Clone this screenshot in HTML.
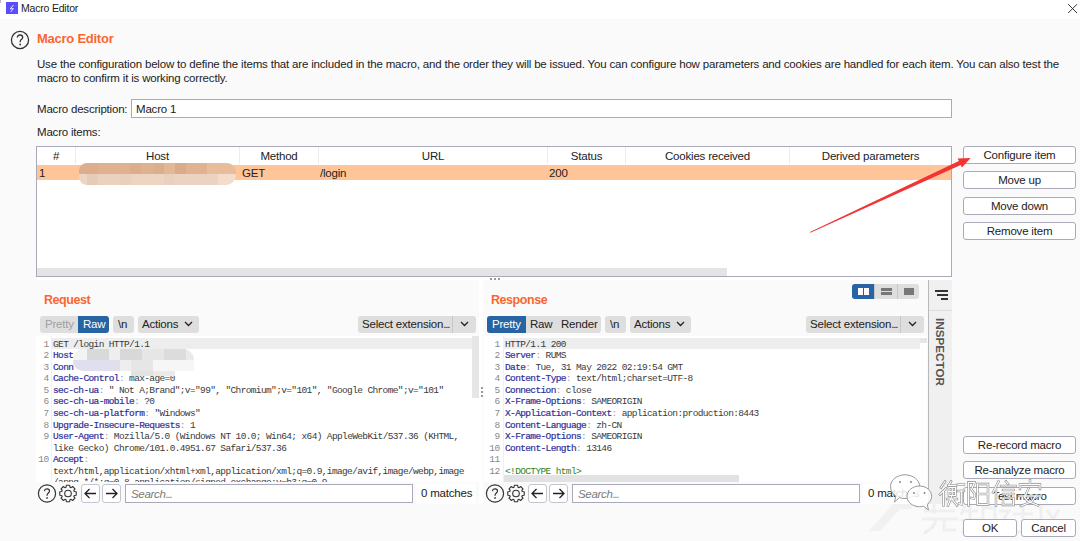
<!DOCTYPE html>
<html><head><meta charset="utf-8">
<style>
*{box-sizing:border-box;margin:0;padding:0}
html,body{width:1080px;height:541px;overflow:hidden;background:#fafafa;font-family:"Liberation Sans",sans-serif;color:#222;font-size:11.5px;letter-spacing:-0.2px}
.a{position:absolute;white-space:nowrap}
.btn{position:absolute;background:#fff;border:1px solid #a9a9ba;border-radius:3px;text-align:center;font-size:11.5px;color:#222;line-height:16px;white-space:nowrap}
.orange{color:#fa6631;font-weight:bold;letter-spacing:-0.45px}
.seg{position:absolute;background:#dedede;border-radius:3px;font-size:11.5px;line-height:17px;color:#222;white-space:nowrap}
.code{position:absolute;font-family:"Liberation Mono",monospace;font-size:9.5px;letter-spacing:-0.63px;line-height:11.54px;color:#3a3a3a;white-space:pre;margin-top:0.7px}
.k{color:#30309a;-webkit-text-stroke:0.2px #30309a}
.p{color:#999}
.g{color:#2a842a}
.ln{position:absolute;font-family:"Liberation Mono",monospace;font-size:9.5px;line-height:11.54px;color:#888;text-align:right;white-space:pre;margin-top:0.7px;letter-spacing:-0.3px}
.th{position:absolute;top:149.5px;font-size:11.5px;color:#222;text-align:center}
.sep{position:absolute;top:147px;width:1px;height:17px;background:#ececec}
</style></head><body>
<!-- title bar -->
<div class="a" style="left:0;top:0;width:1080px;height:19px;background:#fff"></div>
<div class="a" style="left:0;top:0;width:1px;height:3px;background:#bbb"></div>
<div class="a" style="left:6px;top:2px;width:12px;height:12px;background:#5b4dfc"></div>
<svg class="a" style="left:6px;top:2px" width="12" height="12" viewBox="0 0 12 12"><path d="M7.6 3 L4.2 6.8 L7.4 6.6 L4.6 10" fill="none" stroke="#e8e6ff" stroke-width="1"/></svg>
<div class="a" style="left:21px;top:2px;font-size:10.5px;color:#222">Macro Editor</div>
<svg class="a" style="left:1067px;top:3px" width="11" height="11" viewBox="0 0 11 11"><path d="M1.2 1.2 L10 10 M10 1.2 L1.2 10" stroke="#333" stroke-width="1"/></svg>

<!-- header -->
<svg class="a" style="left:10px;top:30px" width="20" height="20" viewBox="0 0 20 20"><circle cx="10" cy="10" r="8.6" fill="none" stroke="#333" stroke-width="1.3"/><path d="M7.3 7.6 C7.3 5.9 8.5 5 10 5 C11.6 5 12.7 6 12.7 7.4 C12.7 9.2 10.4 9.4 10.2 11.4 L10.2 12.3" fill="none" stroke="#333" stroke-width="1.3"/><circle cx="10.2" cy="14.5" r="0.9" fill="#333"/></svg>
<div class="a orange" style="left:37px;top:31px;font-size:13px;letter-spacing:-0.25px">Macro Editor</div>

<div class="a" style="left:37px;top:57.2px;line-height:14px;letter-spacing:-0.18px">Use the configuration below to define the items that are included in the macro, and the order they will be issued. You can configure how parameters and cookies are handled for each item. You can also test the<br>macro to confirm it is working correctly.</div>

<div class="a" style="left:37px;top:102.7px">Macro description:</div>
<div class="a" style="left:131px;top:99px;width:821px;height:19px;background:#fff;border:1px solid #a9a9ba"></div>
<div class="a" style="left:136px;top:102.7px">Macro 1</div>
<div class="a" style="left:37px;top:125.7px">Macro items:</div>

<!-- table -->
<div class="a" style="left:36px;top:146px;width:916px;height:131px;background:#fff;border:1px solid #a9a9ba"></div>
<div class="a" style="left:37px;top:268px;width:690px;height:8px;background:#e4e4e4"></div>
<div class="sep" style="left:75px"></div>
<div class="sep" style="left:239px"></div>
<div class="sep" style="left:318px"></div>
<div class="sep" style="left:547px"></div>
<div class="sep" style="left:625px"></div>
<div class="sep" style="left:789px"></div>
<div class="th" style="left:37px;width:38px">#</div>
<div class="th" style="left:76px;width:163px">Host</div>
<div class="th" style="left:240px;width:78px">Method</div>
<div class="th" style="left:319px;width:228px">URL</div>
<div class="th" style="left:548px;width:77px">Status</div>
<div class="th" style="left:626px;width:163px">Cookies received</div>
<div class="th" style="left:790px;width:161px">Derived parameters</div>
<div class="a" style="left:37px;top:165px;width:914px;height:15px;background:#ffc599"></div>
<div class="a" style="left:39px;top:166.8px">1</div>
<div class="a" style="left:242px;top:166.8px">GET</div>
<div class="a" style="left:320px;top:166.8px">/login</div>
<div class="a" style="left:549px;top:166.8px">200</div>
<!-- blurred host -->
<div class="a" style="left:79px;top:163px;width:157px;height:22px;overflow:hidden;border-radius:8px 9px 10px 8px"><div class="a" style="left:0px;top:0;width:19px;height:11px;background:#dcae8d"></div><div class="a" style="left:19px;top:0;width:32px;height:11px;background:#dfb18f"></div><div class="a" style="left:51px;top:0;width:11px;height:11px;background:#dcad8d"></div><div class="a" style="left:62px;top:0;width:13px;height:11px;background:#dfb28f"></div><div class="a" style="left:75px;top:0;width:10px;height:11px;background:#dbae90"></div><div class="a" style="left:85px;top:0;width:11px;height:11px;background:#e4b795"></div><div class="a" style="left:96px;top:0;width:11px;height:11px;background:#dbaa88"></div><div class="a" style="left:107px;top:0;width:21px;height:11px;background:#e0b290"></div><div class="a" style="left:128px;top:0;width:29px;height:11px;background:#e9bd9a"></div><div class="a" style="left:0px;top:11px;width:8px;height:11px;background:#eed5c2"></div><div class="a" style="left:8px;top:11px;width:11px;height:11px;background:#e6cbb9"></div><div class="a" style="left:19px;top:11px;width:22px;height:11px;background:#ebd2bf"></div><div class="a" style="left:41px;top:11px;width:11px;height:11px;background:#e9cfbc"></div><div class="a" style="left:52px;top:11px;width:33px;height:11px;background:#eed5c2"></div><div class="a" style="left:85px;top:11px;width:11px;height:11px;background:#e9d0bf"></div><div class="a" style="left:96px;top:11px;width:43px;height:11px;background:#ecd3c1"></div><div class="a" style="left:139px;top:11px;width:18px;height:11px;background:#f3dcca"></div></div>

<!-- faint watermark -->
<svg class="a" style="left:0;top:0" width="1080" height="541" viewBox="0 0 1080 541"><path d="M869 531 L894 503 L912 503 L912 509 L900 509 L880 531 Z" fill="#f1f1f1"/>
<g fill="none" stroke="#efefef" stroke-width="3">
<path d="M928 503 L925 511 M934 502 L934 514 M924 511 L955 511 M922 519 L958 519 M936 519 C935 526 931 530 924 533 M944 519 L944 530 L956 530"/>
<path d="M965 505 L961 515 M962 511 L978 511 M961 520 L979 520 M970 505 L970 520 M970 520 L962 533 M970 520 L978 532 M983 508 L995 508 L995 532 L983 532 Z"/>
<path d="M1003 503 L1006 506 M999 511 L1009 511 L1002 522 M1005 516 L1005 535 M1005 520 L1009 524 M1023 502 L1023 532 M1013 514 L1033 514 M1011 532 L1035 532"/>
<path d="M1063 504 L1041 504 L1041 533 L1064 533 M1047 510 L1059 528 M1059 510 L1047 528"/>
</g></svg>
<!-- right buttons -->
<div class="btn" style="left:963px;top:146px;width:113px;height:18px">Configure item</div>
<div class="btn" style="left:963px;top:171px;width:113px;height:18px">Move up</div>
<div class="btn" style="left:963px;top:197px;width:113px;height:18px">Move down</div>
<div class="btn" style="left:963px;top:222px;width:113px;height:18px">Remove item</div>
<div class="btn" style="left:963px;top:436px;width:113px;height:18px">Re-record macro</div>
<div class="btn" style="left:963px;top:461px;width:113px;height:18px">Re-analyze macro</div>
<div class="btn" style="left:963px;top:487px;width:113px;height:18px">Test macro</div>
<div class="btn" style="left:963px;top:519px;width:54px;height:18px">OK</div>
<div class="btn" style="left:1021px;top:519px;width:55px;height:18px">Cancel</div>

<!-- red arrow -->
<svg class="a" style="left:0;top:0" width="1080" height="541" viewBox="0 0 1080 541"><path d="M810.0 231.95 L958.9 161.0 L957.7 158.4 L970.7 157.9 L961.9 167.5 L960.7 164.9 L810.4 232.85 Z" fill="#f23434"/></svg>

<!-- splitter -->
<div class="a" style="left:37px;top:277px;width:915px;height:3px;background:#fff"></div>
<div class="a" style="left:490px;top:278px;width:2px;height:2px;background:#999"></div>
<div class="a" style="left:494px;top:278px;width:2px;height:2px;background:#999"></div>
<div class="a" style="left:498px;top:278px;width:2px;height:2px;background:#999"></div>
<div class="a" style="left:479px;top:280px;width:4px;height:224px;background:#fff"></div>

<!-- REQUEST -->
<div class="a orange" style="left:44px;top:293px;font-size:12.5px">Request</div>
<div class="seg" style="left:40px;top:316px;width:68px;height:17px"><span style="position:absolute;left:5px;color:#a0a0a0">Pretty</span></div>
<div class="seg" style="left:78px;top:316px;width:31px;height:17px;background:#2664a3;color:#fff;border-radius:0 3px 3px 0"><span style="position:absolute;left:5px">Raw</span></div>
<div class="seg" style="left:113px;top:316px;width:21px;height:17px"><span style="position:absolute;left:5px">\n</span></div>
<div class="seg" style="left:138px;top:316px;width:61px;height:17px"><span style="position:absolute;left:4px">Actions</span>
<svg style="position:absolute;left:46px;top:5px" width="9" height="6" viewBox="0 0 9 6"><path d="M1 1 L4.5 4.5 L8 1" stroke="#222" stroke-width="1.3" fill="none"/></svg></div>
<div class="seg" style="left:358px;top:316px;width:118px;height:17px"><span style="position:absolute;left:4px">Select extension<span style="letter-spacing:-1.2px">...</span></span><div style="position:absolute;left:94px;top:0;width:1px;height:17px;background:#c8c8c8"></div>
<svg style="position:absolute;left:102px;top:5px" width="9" height="6" viewBox="0 0 9 6"><path d="M1 1 L4.5 4.5 L8 1" stroke="#222" stroke-width="1.3" fill="none"/></svg></div>

<div class="a" style="left:36px;top:336px;width:444px;height:146px;background:#fff"></div>
<div class="a" style="left:51px;top:336px;width:1px;height:146px;background:#f0f0f0"></div>
<div class="a" style="left:52px;top:338px;width:421px;height:11px;background:#ededed"></div>
<div class="a" style="left:472px;top:336px;width:7px;height:62px;background:#e6e6e6"></div>
<div class="ln" style="left:36px;top:338px;width:13px">1
2
3
4
5
6
7
8
9

10</div>
<div class="code" style="left:53px;top:338px">GET /login HTTP/1.1
<span class="k">Host</span><span class="p">:</span>
<span class="k">Conn</span>
<span class="k">Cache-Control</span><span class="p">:</span> max-age=0
<span class="k">sec-ch-ua</span><span class="p">:</span> " Not A;Brand";v="99", "Chromium";v="101", "Google Chrome";v="101"
<span class="k">sec-ch-ua-mobile</span><span class="p">:</span> ?0
<span class="k">sec-ch-ua-platform</span><span class="p">:</span> "Windows"
<span class="k">Upgrade-Insecure-Requests</span><span class="p">:</span> 1
<span class="k">User-Agent</span><span class="p">:</span> Mozilla/5.0 (Windows NT 10.0; Win64; x64) AppleWebKit/537.36 (KHTML,
like Gecko) Chrome/101.0.4951.67 Safari/537.36
<span class="k">Accept</span><span class="p">:</span>
text/html,application/xhtml+xml,application/xml;q=0.9,image/avif,image/webp,image
/apng,*/*;q=0.8,application/signed-exchange;v=b3;q=0.9</div>
<!-- blurred host in request -->
<div class="a" style="left:74px;top:349px;width:120px;height:11px;overflow:hidden;border-radius:9px 12px 0 0">
<div class="a" style="left:0;top:0;width:13px;height:11px;background:#f3f3f3"></div>
<div class="a" style="left:13px;top:0;width:22px;height:11px;background:#d9d9d9"></div>
<div class="a" style="left:35px;top:0;width:11px;height:11px;background:#eeeeee"></div>
<div class="a" style="left:46px;top:0;width:22px;height:11px;background:#d8d8d8"></div>
<div class="a" style="left:68px;top:0;width:22px;height:11px;background:#e6e6e6"></div>
<div class="a" style="left:90px;top:0;width:22px;height:11px;background:#dcdcdc"></div>
<div class="a" style="left:112px;top:0;width:8px;height:11px;background:#eaeaea"></div>
</div>
<div class="a" style="left:73px;top:360px;width:121px;height:11px;overflow:hidden;border-radius:0 0 0 10px">
<div class="a" style="left:0;top:0;width:47px;height:11px;background:#dfdfee"></div>
<div class="a" style="left:47px;top:0;width:11px;height:11px;background:#eeeeee"></div>
<div class="a" style="left:58px;top:0;width:22px;height:11px;background:#e6e6e6"></div>
<div class="a" style="left:80px;top:0;width:41px;height:11px;background:#f6f6f6"></div>
</div>
<div class="a" style="left:131px;top:371px;width:22px;height:5px;background:#e3e3e3"></div>
<div class="a" style="left:153px;top:371px;width:22px;height:5px;background:#eaeaea"></div>

<!-- search row request -->
<div class="a" style="left:36px;top:482px;width:437px;height:22px;background:#fafafa"></div>
<svg class="a" style="left:37px;top:484px" width="20" height="19" viewBox="0 0 20 19"><circle cx="10" cy="9.5" r="8.6" fill="none" stroke="#333" stroke-width="1.2"/><path d="M7.5 7.2 C7.5 5.6 8.6 4.8 10 4.8 C11.5 4.8 12.5 5.7 12.5 7 C12.5 8.8 10.3 9 10.1 10.9 L10.1 11.8" fill="none" stroke="#333" stroke-width="1.2"/><circle cx="10.1" cy="13.9" r="0.85" fill="#333"/></svg>
<svg class="a" style="left:58px;top:484px" width="20" height="19" viewBox="0 0 20 19"><g fill="none" stroke="#333" stroke-width="1.1"><circle cx="10" cy="9.5" r="3.3"/><path d="M16.31 7.55 L18.23 7.83 L18.23 11.17 L16.31 11.45 L15.84 12.58 L17.00 14.14 L14.64 16.50 L13.08 15.34 L11.95 15.81 L11.67 17.73 L8.33 17.73 L8.05 15.81 L6.92 15.34 L5.36 16.50 L3.00 14.14 L4.16 12.58 L3.69 11.45 L1.77 11.17 L1.77 7.83 L3.69 7.55 L4.16 6.42 L3.00 4.86 L5.36 2.50 L6.92 3.66 L8.05 3.19 L8.33 1.27 L11.67 1.27 L11.95 3.19 L13.08 3.66 L14.64 2.50 L17.00 4.86 L15.84 6.42 Z" stroke-linejoin="round"/></g></svg>
<div class="btn" style="left:81px;top:484px;width:19px;height:19px;border-color:#c4c4d0"></div>
<svg class="a" style="left:81px;top:484px" width="19" height="19" viewBox="0 0 19 19"><path d="M4 9.5 H15 M8.5 5 L4 9.5 L8.5 14" fill="none" stroke="#222" stroke-width="1.3"/></svg>
<div class="btn" style="left:102px;top:484px;width:19px;height:19px;border-color:#c4c4d0"></div>
<svg class="a" style="left:102px;top:484px" width="19" height="19" viewBox="0 0 19 19"><path d="M4 9.5 H15 M10.5 5 L15 9.5 L10.5 14" fill="none" stroke="#222" stroke-width="1.3"/></svg>
<div class="a" style="left:125px;top:484px;width:288px;height:19px;background:#fff;border:1px solid #a9a9ba"></div>
<div class="a" style="left:131px;top:487.5px;font-style:italic;color:#7a7a7a;letter-spacing:-0.3px">Search<span style="letter-spacing:-1.1px">...</span></div>
<div class="a" style="left:416px;top:483px;width:60px;height:21px;background:#fefefe"></div>
<div class="a" style="left:421px;top:487px">0 matches</div>

<!-- RESPONSE -->
<div class="a orange" style="left:491px;top:293px;font-size:12.5px">Response</div>
<div class="seg" style="left:487px;top:316px;width:114px;height:17px"><span style="position:absolute;left:43px">Raw</span><span style="position:absolute;left:74px">Render</span></div>
<div class="seg" style="left:487px;top:316px;width:39px;height:17px;background:#2664a3;color:#fff;border-radius:3px 0 0 3px"><span style="position:absolute;left:5px">Pretty</span></div>
<div class="seg" style="left:605px;top:316px;width:21px;height:17px"><span style="position:absolute;left:5px">\n</span></div>
<div class="seg" style="left:630px;top:316px;width:61px;height:17px"><span style="position:absolute;left:4px">Actions</span>
<svg style="position:absolute;left:46px;top:5px" width="9" height="6" viewBox="0 0 9 6"><path d="M1 1 L4.5 4.5 L8 1" stroke="#222" stroke-width="1.3" fill="none"/></svg></div>
<div class="seg" style="left:806px;top:316px;width:118px;height:17px"><span style="position:absolute;left:4px">Select extension<span style="letter-spacing:-1.2px">...</span></span><div style="position:absolute;left:94px;top:0;width:1px;height:17px;background:#c8c8c8"></div>
<svg style="position:absolute;left:102px;top:5px" width="9" height="6" viewBox="0 0 9 6"><path d="M1 1 L4.5 4.5 L8 1" stroke="#222" stroke-width="1.3" fill="none"/></svg></div>

<!-- view toggles -->
<div class="a" style="left:852px;top:284px;width:67px;height:15px;background:#dedede;border-radius:3px"></div>
<div class="a" style="left:852px;top:284px;width:22px;height:15px;background:#2664a3;border-radius:3px 0 0 3px"></div>
<div class="a" style="left:874px;top:284px;width:1px;height:15px;background:#c8c8c8"></div>
<div class="a" style="left:897px;top:284px;width:1px;height:15px;background:#c8c8c8"></div>
<div class="a" style="left:858px;top:288px;width:5px;height:7px;background:#fff"></div>
<div class="a" style="left:864px;top:288px;width:5px;height:7px;background:#fff"></div>
<div class="a" style="left:881px;top:288px;width:11px;height:3px;background:#777"></div>
<div class="a" style="left:881px;top:292px;width:11px;height:3px;background:#777"></div>
<div class="a" style="left:904px;top:288px;width:10px;height:7px;background:#777"></div>

<div class="a" style="left:484px;top:336px;width:443px;height:146px;background:#fff"></div>
<div class="a" style="left:503px;top:336px;width:1px;height:146px;background:#f0f0f0"></div>
<div class="a" style="left:504px;top:338px;width:416px;height:11px;background:#ededed"></div>
<div class="a" style="left:920px;top:338px;width:7px;height:5px;background:#e6e6e6"></div>
<div class="a" style="left:504px;top:475px;width:235px;height:7px;background:#e2e2e2"></div>
<div class="ln" style="left:484px;top:338px;width:16px">1
2
3
4
5
6
7
8
9
10
11
12</div>
<div class="code" style="left:505px;top:338px">HTTP/1.1 200
<span class="k">Server</span><span class="p">:</span> RUMS
<span class="k">Date</span><span class="p">:</span> Tue, 31 May 2022 02:19:54 GMT
<span class="k">Content-Type</span><span class="p">:</span> text/html;charset=UTF-8
<span class="k">Connection</span><span class="p">:</span> close
<span class="k">X-Frame-Options</span><span class="p">:</span> SAMEORIGIN
<span class="k">X-Application-Context</span><span class="p">:</span> application:production:8443
<span class="k">Content-Language</span><span class="p">:</span> zh-CN
<span class="k">X-Frame-Options</span><span class="p">:</span> SAMEORIGIN
<span class="k">Content-Length</span><span class="p">:</span> 13146

<span class="g">&lt;!DOCTYPE html&gt;</span></div>
<!-- splitter dots vertical -->
<div class="a" style="left:481px;top:387px;width:2px;height:2px;background:#999"></div>
<div class="a" style="left:481px;top:391px;width:2px;height:2px;background:#999"></div>
<div class="a" style="left:481px;top:395px;width:2px;height:2px;background:#999"></div>

<!-- search row response -->
<svg class="a" style="left:485px;top:484px" width="20" height="19" viewBox="0 0 20 19"><circle cx="10" cy="9.5" r="8.6" fill="none" stroke="#333" stroke-width="1.2"/><path d="M7.5 7.2 C7.5 5.6 8.6 4.8 10 4.8 C11.5 4.8 12.5 5.7 12.5 7 C12.5 8.8 10.3 9 10.1 10.9 L10.1 11.8" fill="none" stroke="#333" stroke-width="1.2"/><circle cx="10.1" cy="13.9" r="0.85" fill="#333"/></svg>
<svg class="a" style="left:506px;top:484px" width="20" height="19" viewBox="0 0 20 19"><g fill="none" stroke="#333" stroke-width="1.1"><circle cx="10" cy="9.5" r="3.3"/><path d="M16.31 7.55 L18.23 7.83 L18.23 11.17 L16.31 11.45 L15.84 12.58 L17.00 14.14 L14.64 16.50 L13.08 15.34 L11.95 15.81 L11.67 17.73 L8.33 17.73 L8.05 15.81 L6.92 15.34 L5.36 16.50 L3.00 14.14 L4.16 12.58 L3.69 11.45 L1.77 11.17 L1.77 7.83 L3.69 7.55 L4.16 6.42 L3.00 4.86 L5.36 2.50 L6.92 3.66 L8.05 3.19 L8.33 1.27 L11.67 1.27 L11.95 3.19 L13.08 3.66 L14.64 2.50 L17.00 4.86 L15.84 6.42 Z" stroke-linejoin="round"/></g></svg>
<div class="btn" style="left:528px;top:484px;width:19px;height:19px;border-color:#c4c4d0"></div>
<svg class="a" style="left:528px;top:484px" width="19" height="19" viewBox="0 0 19 19"><path d="M4 9.5 H15 M8.5 5 L4 9.5 L8.5 14" fill="none" stroke="#222" stroke-width="1.3"/></svg>
<div class="btn" style="left:549px;top:484px;width:19px;height:19px;border-color:#c4c4d0"></div>
<svg class="a" style="left:549px;top:484px" width="19" height="19" viewBox="0 0 19 19"><path d="M4 9.5 H15 M10.5 5 L15 9.5 L10.5 14" fill="none" stroke="#222" stroke-width="1.3"/></svg>
<div class="a" style="left:572px;top:484px;width:288px;height:19px;background:#fff;border:1px solid #a9a9ba"></div>
<div class="a" style="left:578px;top:487.5px;font-style:italic;color:#7a7a7a;letter-spacing:-0.3px">Search<span style="letter-spacing:-1.1px">...</span></div>
<div class="a" style="left:863px;top:483px;width:60px;height:21px;background:#fefefe"></div>
<div class="a" style="left:868px;top:487px">0 matches</div>

<!-- inspector -->
<div class="a" style="left:928px;top:280px;width:1px;height:224px;background:#b8b8b8"></div>
<div class="a" style="left:929px;top:280px;width:23px;height:224px;background:#f1f0f1"></div>
<div class="a" style="left:929px;top:310px;width:23px;height:1px;background:#ddd"></div>
<div class="a" style="left:935px;top:290px;width:13px;height:1.5px;background:#333"></div>
<div class="a" style="left:937px;top:294px;width:11px;height:1.5px;background:#333"></div>
<div class="a" style="left:941px;top:298px;width:7px;height:1.5px;background:#333"></div>
<div class="a" style="left:934px;top:318px;font-size:11.7px;font-weight:bold;color:#555;transform:rotate(90deg) translate(0,-100%);transform-origin:0 0;letter-spacing:0px">INSPECTOR</div>

<!-- watermark -->
<svg class="a" style="left:0;top:0" width="1080" height="541" viewBox="0 0 1080 541">

<g stroke="#9a9a9a" stroke-width="1" fill="#fff" fill-opacity="0.85">
<path d="M905 474.8 C913 474.8 919.7 480 919.7 486.5 C919.7 493 913 498.5 905 498.5 C903 498.5 901 498.2 899.5 497.6 L894.5 502 L895.8 496 C892.6 493.8 890.5 490.4 890.5 486.5 C890.5 480 897 474.8 905 474.8 Z"/>
<path d="M919.5 486 C926.3 486 931.6 490.5 931.6 496.3 C931.6 499.6 929.8 502.5 927.2 504.4 L928.5 510 L923.5 506.2 C922.2 506.5 920.9 506.7 919.5 506.7 C912.7 506.7 907 502.2 907 496.3 C907 490.5 912.7 486 919.5 486 Z"/>
</g>
<g fill="#888"><circle cx="900" cy="482" r="1"/><circle cx="911" cy="482" r="1"/><circle cx="914" cy="493" r="1"/><circle cx="924.5" cy="493" r="1"/></g>
<g fill="none" stroke="#8e8e8e" stroke-width="2.4" stroke-linecap="square"><path transform="translate(939 480.5)" d="M6 1 L2 7"/><path transform="translate(939 480.5)" d="M7 8 L1 14"/><path transform="translate(939 480.5)" d="M4.5 11 L4.5 25"/><path transform="translate(939 480.5)" d="M12 1 L9.5 5"/><path transform="translate(939 480.5)" d="M9.5 5 L17 5"/><path transform="translate(939 480.5)" d="M10 7 L16.5 7 L16.5 15 L10 15 Z"/><path transform="translate(939 480.5)" d="M10 11 L16.5 11"/><path transform="translate(939 480.5)" d="M13.2 7 L13.2 15"/><path transform="translate(939 480.5)" d="M8 18.5 L18 18.5"/><path transform="translate(939 480.5)" d="M13 15 L9 25"/><path transform="translate(939 480.5)" d="M13 18.5 L18 25"/><path transform="translate(939 480.5)" d="M19 4 L25 4"/><path transform="translate(939 480.5)" d="M19 10.5 L25 10.5"/><path transform="translate(939 480.5)" d="M22.3 10.5 L22.3 24 L20 23"/><path transform="translate(965 480.5)" d="M3.5 2 L3.5 25"/><path transform="translate(965 480.5)" d="M3.5 2 L9.5 2 L6.5 9 L10 14 L9 18 L6 17.5"/><path transform="translate(965 480.5)" d="M12.5 3.5 L23 3.5 L23 24 L12.5 24 Z"/><path transform="translate(965 480.5)" d="M12.5 13.5 L23 13.5"/><path transform="translate(991 480.5)" d="M7.5 1 L2 12"/><path transform="translate(991 480.5)" d="M5 8 L5 25"/><path transform="translate(991 480.5)" d="M15 1 L17 3.5"/><path transform="translate(991 480.5)" d="M10 5.5 L24.5 5.5"/><path transform="translate(991 480.5)" d="M12 9.5 L22.5 9.5"/><path transform="translate(991 480.5)" d="M12 13.5 L22.5 13.5"/><path transform="translate(991 480.5)" d="M12 17.5 L22.5 17.5 L22.5 24.5 L12 24.5 Z"/><path transform="translate(1017 480.5)" d="M13 0 L13 3"/><path transform="translate(1017 480.5)" d="M3 8.5 L3 4 L23 4 L23 8.5"/><path transform="translate(1017 480.5)" d="M2 15.5 L24 15.5"/><path transform="translate(1017 480.5)" d="M11.5 8 L7.5 17 L10.5 20.5 L21 25"/><path transform="translate(1017 480.5)" d="M18.5 15.5 L15 21 L4 25.5"/></g><g fill="none" stroke="#fff" stroke-width="1.2" stroke-linecap="square"><path transform="translate(939 480.5)" d="M6 1 L2 7"/><path transform="translate(939 480.5)" d="M7 8 L1 14"/><path transform="translate(939 480.5)" d="M4.5 11 L4.5 25"/><path transform="translate(939 480.5)" d="M12 1 L9.5 5"/><path transform="translate(939 480.5)" d="M9.5 5 L17 5"/><path transform="translate(939 480.5)" d="M10 7 L16.5 7 L16.5 15 L10 15 Z"/><path transform="translate(939 480.5)" d="M10 11 L16.5 11"/><path transform="translate(939 480.5)" d="M13.2 7 L13.2 15"/><path transform="translate(939 480.5)" d="M8 18.5 L18 18.5"/><path transform="translate(939 480.5)" d="M13 15 L9 25"/><path transform="translate(939 480.5)" d="M13 18.5 L18 25"/><path transform="translate(939 480.5)" d="M19 4 L25 4"/><path transform="translate(939 480.5)" d="M19 10.5 L25 10.5"/><path transform="translate(939 480.5)" d="M22.3 10.5 L22.3 24 L20 23"/><path transform="translate(965 480.5)" d="M3.5 2 L3.5 25"/><path transform="translate(965 480.5)" d="M3.5 2 L9.5 2 L6.5 9 L10 14 L9 18 L6 17.5"/><path transform="translate(965 480.5)" d="M12.5 3.5 L23 3.5 L23 24 L12.5 24 Z"/><path transform="translate(965 480.5)" d="M12.5 13.5 L23 13.5"/><path transform="translate(991 480.5)" d="M7.5 1 L2 12"/><path transform="translate(991 480.5)" d="M5 8 L5 25"/><path transform="translate(991 480.5)" d="M15 1 L17 3.5"/><path transform="translate(991 480.5)" d="M10 5.5 L24.5 5.5"/><path transform="translate(991 480.5)" d="M12 9.5 L22.5 9.5"/><path transform="translate(991 480.5)" d="M12 13.5 L22.5 13.5"/><path transform="translate(991 480.5)" d="M12 17.5 L22.5 17.5 L22.5 24.5 L12 24.5 Z"/><path transform="translate(1017 480.5)" d="M13 0 L13 3"/><path transform="translate(1017 480.5)" d="M3 8.5 L3 4 L23 4 L23 8.5"/><path transform="translate(1017 480.5)" d="M2 15.5 L24 15.5"/><path transform="translate(1017 480.5)" d="M11.5 8 L7.5 17 L10.5 20.5 L21 25"/><path transform="translate(1017 480.5)" d="M18.5 15.5 L15 21 L4 25.5"/></g>
</svg>
</body></html>
